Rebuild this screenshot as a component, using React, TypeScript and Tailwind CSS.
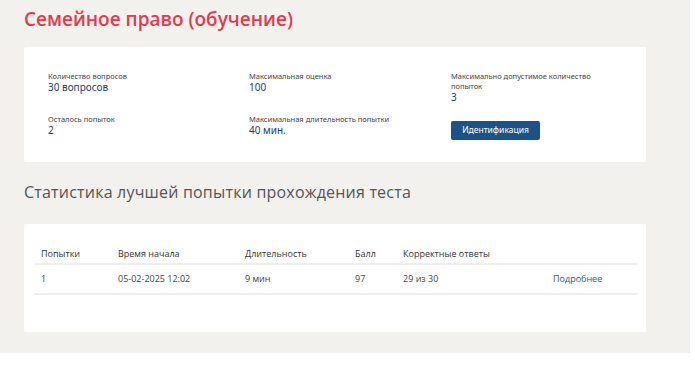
import React from 'react';

const INFO = [
  { label: 'Количество вопросов', value: '30 вопросов' },
  { label: 'Максимальная оценка', value: '100' },
  { label: 'Максимально допустимое количество попыток', value: '3' },
  { label: 'Осталось попыток', value: '2' },
  { label: 'Максимальная длительность попытки', value: '40 мин.' },
];

const COLS = ['w-[77px]', 'w-[127px]', 'w-[110px]', 'w-[48px]', 'w-[150px]', 'flex-1'];

const ROW = ['1', '05-02-2025 12:02', '9 мин', '97', '29 из 30'];

export default function App() {
  return (
    <div className="w-[695px] h-[368px] bg-white font-['Open_Sans',sans-serif]">
      <div className="w-[690px] h-[353px] bg-[#f2f1ee] px-6 pt-[6px]">
        <h1 className="text-[19px] leading-[26px] font-semibold text-[#e23a4f]">
          Семейное право (обучение)
        </h1>

        {/* Info card */}
        <div className="mt-[15px] w-[622px] h-[115px] bg-white rounded-[2px] pl-6 pt-[24px]">
          <div className="grid grid-cols-[201px_202px_160px] gap-y-[11px]">
            {INFO.map((item) => (
              <div key={item.label} className="font-['Noto_Sans',sans-serif] text-[#444]">
                <div className="text-[7.5px] leading-[10px]">{item.label}</div>
                <div className="text-[10px] leading-[12px] text-[#1e3d6a]">{item.value}</div>
              </div>
            ))}
            <div className="pt-[1px]">
              <button className="h-[19px] w-[89px] bg-[#1b5386] rounded-[2px] text-white text-[8.5px] font-['Noto_Sans',sans-serif]">
                Идентификация
              </button>
            </div>
          </div>
        </div>

        <h2 className="mt-[19px] text-[16px] leading-[22px] text-[#555] tracking-[0.2px]">
          Статистика лучшей попытки прохождения теста
        </h2>

        {/* Stats card */}
        <div className="mt-[21px] w-[622px] h-[108px] bg-white rounded-[2px] px-[10px] pt-[20px]">
          <div className="w-[603px] text-[9px] text-[#333]">
            <div className="flex items-center h-[21px] pl-[7px] border-b-2 border-[#eeeeee] font-medium text-[#333]">
              {['Попытки', 'Время начала', 'Длительность', 'Балл', 'Корректные ответы', ''].map((h, i) => (
                <div key={i} className={COLS[i]}>{h}</div>
              ))}
            </div>
            <div className="flex items-center h-[30px] pl-[7px] border-b-2 border-[#eeeeee] text-[#444]">
              {ROW.map((c, i) => (
                <div key={i} className={COLS[i]}>{c}</div>
              ))}
              <div className="flex-1 text-[#2b5d8c]">Подробнее</div>
            </div>
          </div>
        </div>
      </div>
    </div>
  );
}
